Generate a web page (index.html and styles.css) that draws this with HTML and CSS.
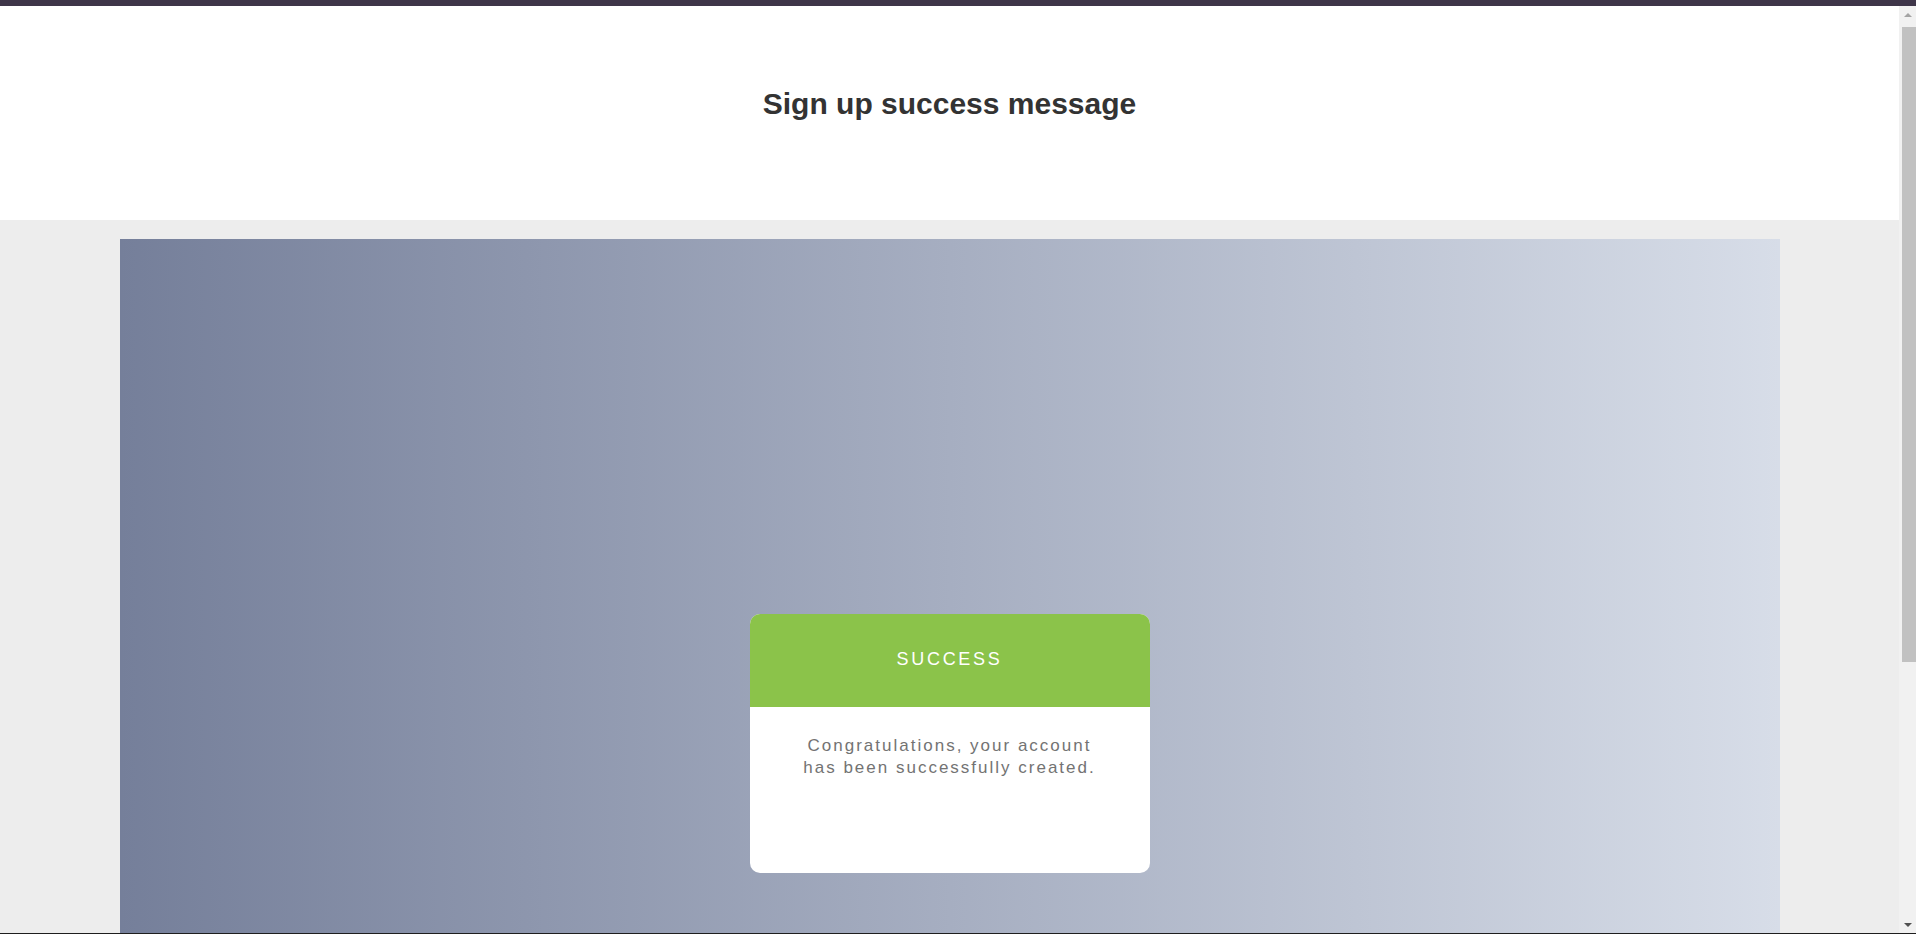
FILE: index.html
```html
<!DOCTYPE html>
<html lang="en">
<head>
<meta charset="utf-8">
<title>Sign up success message</title>
<link rel="stylesheet" href="styles.css">
</head>
<body>
<div class="topbar"></div>
<div class="window">
  <div class="page">
    <header class="header">
      <h1 class="title">Sign up success message</h1>
    </header>
    <section class="stage">
      <div class="panel">
        <div class="card">
          <div class="card-head">SUCCESS</div>
          <div class="card-body">
            <p class="card-text">Congratulations, your account has been successfully created.</p>
          </div>
        </div>
      </div>
    </section>
  </div>
  <div class="scrollbar">
    <div class="sb-btn"><span class="arrow-up"></span></div>
    <div class="sb-gap"></div>
    <div class="sb-thumb"></div>
    <div class="sb-track"></div>
    <div class="sb-btn"><span class="arrow-down"></span></div>
  </div>
</div>
<div class="bottomline"></div>
</body>
</html>
```

FILE: styles.css
```css
html, body {
  margin: 0;
  padding: 0;
}
body {
  height: 934px;
  overflow: hidden;
  display: flex;
  flex-direction: column;
  font-family: "Liberation Sans", Arial, sans-serif;
  background: #ffffff;
}
.topbar {
  height: 6px;
  flex: 0 0 6px;
  background: #3e3549;
}
.window {
  flex: 1 1 auto;
  min-height: 0;
  display: flex;
}
.page {
  flex: 1 1 auto;
  min-width: 0;
  overflow: hidden;
  background: #ededed;
}
.header {
  background: #ffffff;
  height: 214px;
  box-sizing: border-box;
  padding-top: 80px;
}
.title {
  margin: 0;
  text-align: center;
  font-size: 30px;
  line-height: 36px;
  font-weight: bold;
  color: #333333;
}
.stage {
  padding-top: 19px;
  display: flex;
  justify-content: center;
}
.panel {
  width: 1660px;
  height: 1000px;
  box-sizing: border-box;
  padding-top: 375px;
  background: linear-gradient(to right, #757f9a, #d7dde8);
  display: flex;
  justify-content: center;
  align-items: flex-start;
}
.card {
  width: 400px;
  background: #ffffff;
  border-radius: 10px;
  overflow: hidden;
}
.card-head {
  height: 93px;
  box-sizing: border-box;
  padding-bottom: 2px;
  background: #8bc34a;
  color: #ffffff;
  display: flex;
  align-items: center;
  justify-content: center;
  font-size: 18px;
  letter-spacing: 2.7px;
}
.card-body {
  height: 166px;
  box-sizing: border-box;
  padding: 28px 48px 0;
}
.card-text {
  margin: 0;
  text-align: center;
  font-size: 17px;
  line-height: 22px;
  letter-spacing: 2px;
  color: #737373;
}
.scrollbar {
  flex: 0 0 17px;
  width: 17px;
  background: #f1f1f1;
  display: flex;
  flex-direction: column;
  align-items: center;
}
.sb-btn {
  height: 17px;
  flex: 0 0 17px;
  width: 17px;
  display: flex;
  align-items: center;
  justify-content: center;
}
.sb-gap {
  flex: 0 0 4px;
}
.sb-thumb {
  flex: 0 0 635px;
  width: 14px;
  margin-left: 2px;
  background: #c1c1c1;
}
.sb-track {
  flex: 1 1 auto;
}
.arrow-up {
  width: 0;
  height: 0;
  border-left: 4px solid transparent;
  border-right: 4px solid transparent;
  border-bottom: 4px solid #a3a3a3;
}
.arrow-down {
  width: 0;
  height: 0;
  border-left: 4px solid transparent;
  border-right: 4px solid transparent;
  border-top: 4px solid #505050;
}
.bottomline {
  height: 1px;
  flex: 0 0 1px;
  background: #1e1e1e;
}
```
